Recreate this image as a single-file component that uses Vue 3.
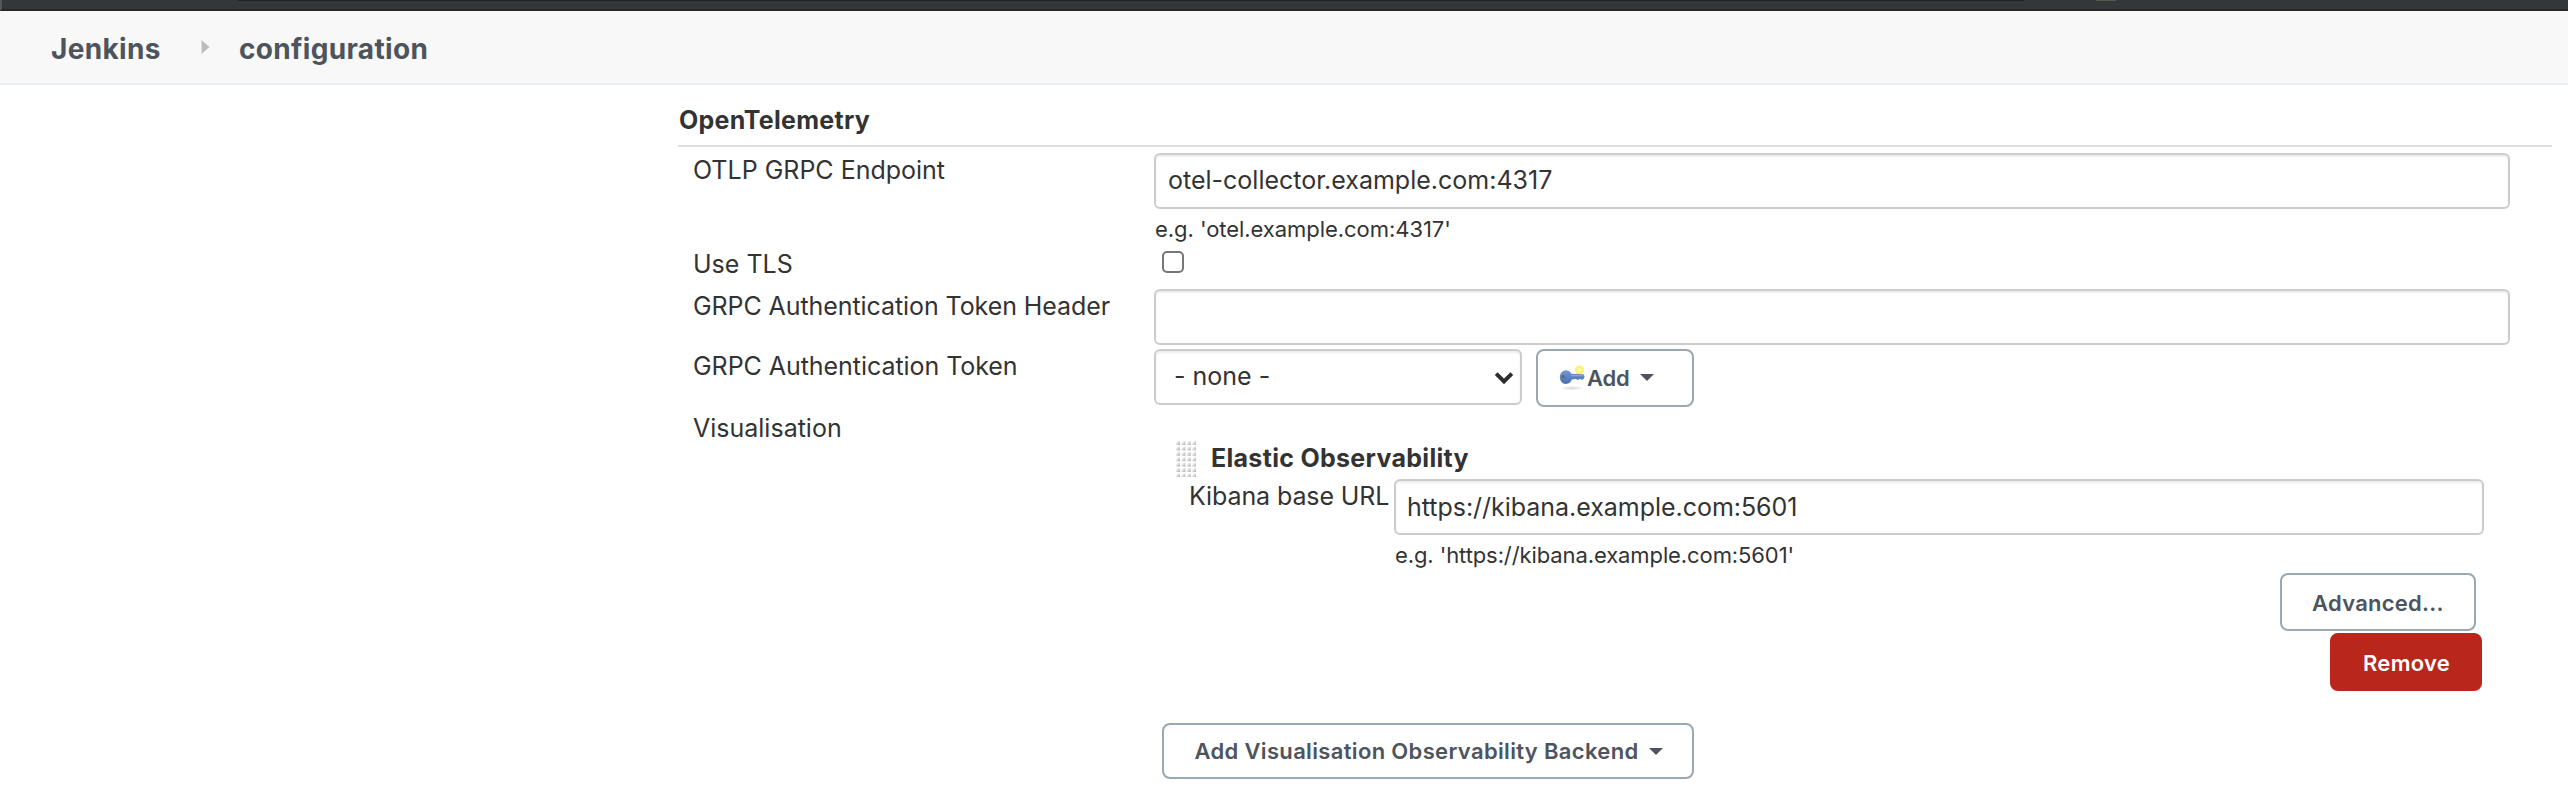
<script setup>
import { ref } from 'vue'

const endpoint = ref('otel-collector.example.com:4317')
const useTls = ref(false)
const tokenHeader = ref('')
const token = ref('none')
const kibanaUrl = ref('https://kibana.example.com:5601')
</script>

<template>
  <div class="page">
    <div class="chrome">
      <span class="chrome-tab"></span>
      <span class="chrome-chip"></span>
    </div>

    <nav class="crumbs">
      <a class="crumb">Jenkins</a>
      <svg class="crumb-sep" width="9" height="14" viewBox="0 0 9 14"><path d="M0.5 0L8.5 7L0.5 14Z" fill="#bdbdbd" /></svg>
      <a class="crumb">configuration</a>
    </nav>

    <main class="section">
      <h2 class="section-title">OpenTelemetry</h2>

      <div class="row row-endpoint">
        <label class="label">OTLP GRPC Endpoint</label>
        <div class="control">
          <input v-model="endpoint" class="field" type="text" />
          <div class="hint">e.g. 'otel.example.com:4317'</div>
        </div>
      </div>

      <div class="row row-tls">
        <label class="label">Use TLS</label>
        <div class="control"><input v-model="useTls" class="check" type="checkbox" /></div>
      </div>

      <div class="row row-header">
        <label class="label label-long">GRPC Authentication Token Header</label>
        <div class="control"><input v-model="tokenHeader" class="field" type="text" /></div>
      </div>

      <div class="row row-token">
        <label class="label label-token">GRPC Authentication Token</label>
        <div class="control inline">
          <div class="select-wrap">
            <select v-model="token" class="field select">
              <option value="none">- none -</option>
            </select>
            <svg class="chevron" width="20" height="14" viewBox="0 0 20 14"><path d="M2.2 2.6L10 10.4L17.8 2.6" fill="none" stroke="#2e2e2e" stroke-width="4" /></svg>
          </div>
          <button class="btn btn-add">
            <svg class="key" width="28" height="26" viewBox="0 0 28 26">
              <defs>
                <linearGradient id="keyBlue" x1="0" y1="0" x2="0" y2="1">
                  <stop offset="0" stop-color="#7599cf" />
                  <stop offset="1" stop-color="#476fae" />
                </linearGradient>
                <radialGradient id="keyShade">
                  <stop offset="0" stop-color="#000" stop-opacity=".16" />
                  <stop offset="1" stop-color="#000" stop-opacity="0" />
                </radialGradient>
              </defs>
              <ellipse cx="13" cy="23.2" rx="11.5" ry="2.4" fill="url(#keyShade)" />
              <circle cx="20.5" cy="5" r="4.5" fill="#fff36a" />
              <path d="M7 5.2C9.5 5.2 11.3 6.6 12.4 8.8L24.6 9.2L25.6 11.4L24.4 14.2L22.6 14.8L20.8 13.8L19 15L17 14L12.9 14.6C12 17.3 9.8 19 7 19C3.2 19 .9 16 .9 12C.9 8.2 3.4 5.2 7 5.2Z" fill="url(#keyBlue)" />
              <path d="M12 10.6H24" stroke="#87a6d6" stroke-width="1.2" />
              <circle cx="4.3" cy="11.8" r="1.7" fill="#53688c" />
              <circle cx="20.5" cy="5" r="1.9" fill="#fffab8" />
            </svg>
            <span>Add</span>
            <svg class="caret" width="14" height="7" viewBox="0 0 14 7"><path d="M0 0H14L7 7Z" fill="#4d545d" /></svg>
          </button>
        </div>
      </div>

      <div class="row row-vis">
        <label class="label">Visualisation</label>
        <div class="control">
          <div class="backend">
            <div class="backend-head">
              <svg class="grip" width="20" height="36" viewBox="0 0 20 36">
                <defs>
                  <linearGradient id="dot" x1="0" y1="0" x2="1" y2="1">
                    <stop offset="0.15" stop-color="#fff" />
                    <stop offset="1" stop-color="#a9a9a6" />
                  </linearGradient>
                </defs>
                <template v-for="r in 7" :key="r">
                  <rect v-for="c in 4" :key="c" :x="(c - 1) * 5.4" :y="(r - 1) * 5.4" width="4" height="4" fill="url(#dot)" />
                </template>
              </svg>
              <b>Elastic Observability</b>
            </div>
            <div class="nested">
              <label class="nested-label">Kibana base URL</label>
              <div>
                <input v-model="kibanaUrl" class="field field-url" type="text" />
                <div class="hint hint-url">e.g. 'https://kibana.example.com:5601'</div>
              </div>
            </div>
            <div class="actions">
              <button class="btn btn-advanced">Advanced...</button>
              <button class="btn btn-remove">Remove</button>
            </div>
          </div>
          <button class="btn btn-backend">
            <span>Add Visualisation Observability Backend</span>
            <svg class="caret" width="14" height="7" viewBox="0 0 14 7"><path d="M0 0H14L7 7Z" fill="#4d545d" /></svg>
          </button>
        </div>
      </div>
    </main>
  </div>
</template>

<style>
body {
  margin: 0;
  background: #fff;
}
</style>

<style scoped>
.page {
  height: 793px;
  overflow: hidden;
  background: #fff;
  color: #333;
  font: 25px/30px Inter, 'Liberation Sans', sans-serif;
}
.page * {
  box-sizing: border-box;
}
.chrome {
  display: flex;
  align-items: flex-start;
  height: 11px;
  background: #35363a;
  border-bottom: 2px solid #292827;
  border-left: 2px solid #55565a;
}
.chrome-tab {
  width: 1786px;
  height: 1px;
  margin-left: 236px;
  background: #202124;
}
.chrome-chip {
  width: 20px;
  height: 1px;
  margin-left: 72px;
  background: #55584f;
}
.crumbs {
  display: flex;
  align-items: center;
  height: 74px;
  padding: 4px 0 0 51px;
  background: #f8f8f8;
  border-bottom: 2px solid #e9eef2;
  color: #4d545d;
  font-size: 28px;
  font-weight: 700;
  letter-spacing: 0.35px;
}
.crumb-sep {
  margin: 0 29px 4px 40px;
}
.section {
  width: 1874px;
  margin-left: 678px;
}
.section-title {
  height: 62px;
  margin: 0;
  padding: 20px 0 0 1px;
  border-bottom: 2px solid #e0e0e0;
  font-size: 25px;
  font-weight: 700;
  line-height: 30px;
  letter-spacing: 0.28px;
}
.row {
  display: grid;
  grid-template-columns: 476px 1356px;
}
.label {
  padding: 4px 0 0 15px;
  white-space: nowrap;
}
.label-long {
  letter-spacing: -0.08px;
}
.label-token {
  letter-spacing: -0.05px;
}
.control {
  padding-top: 2px;
}
.row-endpoint {
  height: 101px;
}
.row-endpoint .label {
  padding-top: 8px;
}
.row-endpoint .control {
  padding-top: 6px;
}
.row-tls {
  height: 39px;
}
.row-tls .label {
  padding-top: 1px;
}
.row-header {
  height: 60px;
}
.row-token {
  height: 62px;
}
.field {
  display: block;
  width: 100%;
  height: 56px;
  margin: 0;
  padding: 0 12px 2px;
  border: 2px solid #ccc;
  border-radius: 6px;
  background: #fff;
  box-shadow: inset 0 2px 2px rgba(0, 0, 0, 0.075);
  color: #333;
  font: inherit;
  letter-spacing: 0;
  outline: none;
}
.field-url {
  padding: 0 11px;
  letter-spacing: -0.03px;
}
.hint {
  margin-top: 5px;
  padding-left: 1px;
  font-size: 22px;
  line-height: 30px;
  letter-spacing: -0.05px;
}
.hint-url {
  letter-spacing: -0.1px;
}
.check {
  display: block;
  appearance: none;
  width: 22px;
  height: 22px;
  margin: 1px 0 0 8px;
  border: 2px solid #767676;
  border-radius: 5px;
  background: #fff;
}
.inline {
  display: flex;
  align-items: flex-start;
  gap: 14px;
}
.select-wrap {
  position: relative;
  width: 368px;
}
.select {
  appearance: none;
  padding-left: 18px;
}
.chevron {
  position: absolute;
  top: 22px;
  right: 8px;
}
.btn {
  display: flex;
  align-items: center;
  justify-content: center;
  height: 58px;
  margin: 0;
  padding: 0;
  border: 2px solid #9aa8b1;
  border-radius: 8px;
  background: #fff;
  color: #4d545d;
  font: 600 22px/30px Inter, 'Liberation Sans', sans-serif;
  letter-spacing: 0.25px;
  white-space: nowrap;
}
.btn-add {
  justify-content: flex-start;
  width: 158px;
  padding: 0 0 1px 21px;
  letter-spacing: -0.2px;
}
.key {
  margin-right: 0;
}
.caret {
  margin-left: 10px;
}
.backend {
  padding: 30px 26px 0 36px;
}
.backend-head {
  display: flex;
  align-items: center;
  height: 36px;
  margin-left: -14px;
  letter-spacing: 0.3px;
}
.backend-head b {
  margin: 0 0 2px 15px;
}
.nested {
  display: grid;
  grid-template-columns: 204px 1fr;
  margin-top: 2px;
}
.nested-label {
  padding-top: 2px;
  margin-left: -1px;
  letter-spacing: -0.1px;
}
.actions {
  display: flex;
  flex-direction: column;
  align-items: flex-end;
  gap: 2px;
  margin-top: 3px;
}
.btn-advanced {
  width: 196px;
  margin-right: 8px;
  padding-top: 2px;
}
.btn-remove {
  width: 152px;
  margin-right: 2px;
  padding: 2px 0 0 1px;
  border-color: #b9261b;
  background: #b9261b;
  color: #fff;
}
.btn-backend {
  width: 532px;
  height: 56px;
  margin: 32px 0 0 8px;
  padding-left: 1px;
  letter-spacing: 0.34px;
}
</style>
